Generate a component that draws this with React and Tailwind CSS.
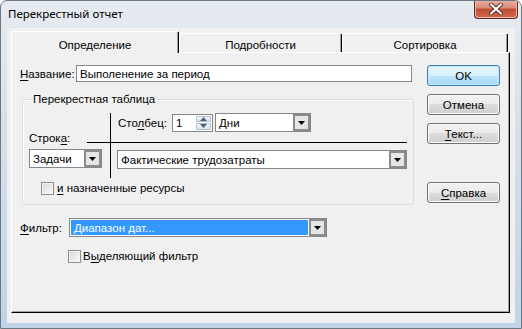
import React from "react";

const U = ({ children }) => (
  <span className="underline decoration-1 underline-offset-[2px]">{children}</span>
);

function Tri({ color = "#000" }) {
  return (
    <svg width="7" height="4" viewBox="0 0 7 4" className="block">
      <path d="M0 0H7L3.5 4Z" fill={color} />
    </svg>
  );
}

function DropBtn() {
  return (
    <div className="flex w-[17px] shrink-0 items-center justify-center border-2 border-[#8c8c8c] bg-[#e6e6e6] pt-px">
      <Tri />
    </div>
  );
}

function Combo({ className, children, selected }) {
  return (
    <div className={"flex h-[19px] shrink-0 border border-[#828790] bg-white " + className}>
      {selected ? (
        <div className="m-px flex min-w-0 flex-1 items-center bg-[#3399ff] pl-[3px] text-white">
          {children}
        </div>
      ) : (
        <div className="flex min-w-0 flex-1 items-center pl-[3px]">{children}</div>
      )}
      <DropBtn />
    </div>
  );
}

function Check() {
  return (
    <div className="h-[13px] w-[13px] shrink-0 border border-[#8e8f8f] bg-[linear-gradient(135deg,#d6d6d6,#fbfbfb)] shadow-[inset_0_0_0_1px_#f4f4f4]" />
  );
}

function Spin() {
  return (
    <div className="flex h-[18px] w-[41px] shrink-0 border border-[#828790] bg-white">
      <div className="flex flex-1 items-center pl-[3px]">1</div>
      <div className="flex w-[17px] flex-col gap-px p-px">
        <div className="flex flex-1 items-center justify-center rounded-[1px] border border-[#b4bfcc] bg-[linear-gradient(#f3f6f9,#d9e1ea)]">
          <svg width="7" height="4" viewBox="0 0 7 4" className="block">
            <path d="M0 4H7L3.5 0Z" fill="#4e6280" />
          </svg>
        </div>
        <div className="flex flex-1 items-center justify-center rounded-[1px] border border-[#b4bfcc] bg-[linear-gradient(#f3f6f9,#d9e1ea)]">
          <Tri color="#4e6280" />
        </div>
      </div>
    </div>
  );
}

function Btn({ children, def }) {
  return (
    <div
      className={
        def
          ? "flex h-[21px] w-[73px] items-center justify-center rounded-[3px] border border-[#3c7fb1] bg-[linear-gradient(#eaf6fd_0%,#d9f0fc_50%,#bee6fd_50%,#a7d9f5_100%)] shadow-[inset_0_0_0_1px_#c8e8fa]"
          : "flex h-[21px] w-[73px] items-center justify-center rounded-[3px] border border-[#707070] bg-[linear-gradient(#f2f2f2_0%,#ebebeb_50%,#dddddd_50%,#cfcfcf_100%)] shadow-[inset_0_0_0_1px_#fbfbfb]"
      }
    >
      {children}
    </div>
  );
}

function CloseX() {
  return (
    <svg width="14" height="12" viewBox="0 0 14 12" className="block">
      <path d="M2 1.5L12 10.5M12 1.5L2 10.5" stroke="#5a2a22" strokeWidth="4" strokeLinecap="round" />
      <path d="M2 1.5L12 10.5M12 1.5L2 10.5" stroke="#ffffff" strokeWidth="2.2" strokeLinecap="round" />
    </svg>
  );
}

export default function App() {
  return (
    <div className="flex h-[329px] w-[522px] flex-col overflow-hidden rounded-t-[7px] border border-[#6d7782] bg-[linear-gradient(180deg,#e6ebf0_0%,#d8e1ea_35%,#bfd4e8_100%)] font-['Liberation_Sans',Arial,sans-serif] text-[11.5px] leading-[14px] text-black">
      {/* title bar */}
      <div className="flex h-[27px] shrink-0 items-start justify-between">
        <div className="pl-[7px] pt-[5px] font-['Noto_Sans',sans-serif] text-[11.5px] leading-[16px] text-black">
          Перекрестный отчет
        </div>
        <div className="-mt-px mr-[3px] flex h-[19px] w-[44px] items-center justify-center rounded-b-[4px] border border-t-0 border-[#5e2a20] bg-[linear-gradient(#eab1a3_0%,#d98a76_45%,#c34a34_50%,#cf6a52_100%)] shadow-[inset_0_0_0_1px_#f0b8a8]">
          <CloseX />
        </div>
      </div>

      {/* client */}
      <div className="mx-[6px] mb-[5px] flex flex-1 flex-col bg-[#f0f0f0] pb-[10px] pl-[4px] pr-[5px] pt-[3px]">
        {/* tabs */}
        <div className="flex h-[21px] shrink-0 items-end">
          <div className="relative z-10 -mb-px flex h-[22px] w-[168px] items-center justify-center rounded-t-[2px] border-l border-r border-t border-white border-r-black bg-[#f0f0f0] pt-[4px] shadow-[inset_-1px_0_0_#a0a0a0]">
            Определение
          </div>
          <div className="flex h-[19px] w-[163px] items-center justify-center rounded-t-[2px] border-l border-r border-t border-white border-r-black bg-[#f0f0f0] pt-[3px] shadow-[inset_-1px_0_0_#a0a0a0]">
            Подробности
          </div>
          <div className="flex h-[19px] w-[166px] items-center justify-center rounded-t-[2px] border-l border-r border-t border-white border-r-black bg-[#f0f0f0] pt-[3px] shadow-[inset_-1px_0_0_#a0a0a0]">
            Сортировка
          </div>
        </div>

        {/* page */}
        <div className="flex flex-1 gap-[14px] border border-white border-b-black border-r-black bg-[#f0f0f0] pl-[8px] pt-[12px] shadow-[inset_-1px_-1px_0_#a0a0a0]">
          {/* left column */}
          <div className="flex w-[393px] flex-col">
            <div className="flex h-[17px] items-center">
              <div className="w-[56px]">
                <U>Н</U>азвание:
              </div>
              <div className="flex h-[17px] w-[336px] items-center border border-[#828790] bg-white pl-[3px]">
                Выполенение за период
              </div>
            </div>

            <fieldset className="ml-[2px] mt-[10px] w-[392px] rounded-[3px] border border-[#d5dfe5] px-[6px] pb-[9px] pt-[7px] shadow-[inset_1px_1px_0_#ffffff]">
              <legend className="ml-[2px] px-[2px] leading-[14px]">Перекрестная таблица</legend>
              <div className="grid grid-cols-[81px_297px]">
                <div className="flex items-end justify-between">
                  <div className="-mb-[2px]">
                    Строк<U>а</U>:
                  </div>
                  <div className="w-[23px] border-b border-black" />
                </div>
                <div className="flex items-center border-b border-l border-black pb-[10px] pl-[7px]">
                  <div className="w-[54px]">
                    Сто<U>л</U>бец:
                  </div>
                  <Spin />
                  <Combo className="ml-[2px] w-[96px]">Дни</Combo>
                </div>
                <div className="pt-[6px]">
                  <Combo className="w-[73px]">Задачи</Combo>
                </div>
                <div className="border-l border-black pb-[9px] pl-[6px] pt-[7px]">
                  <Combo className="w-[290px]">Фактические трудозатраты</Combo>
                </div>
              </div>
              <div className="ml-[12px] mt-[3px] flex items-center gap-[3px]">
                <Check />
                <div>
                  <U>и</U> назначенные ресурсы
                </div>
              </div>
            </fieldset>

            <div className="mt-[13px] flex h-[19px] items-center">
              <div className="w-[49px]">
                <U>Ф</U>ильтр:
              </div>
              <Combo className="w-[258px]" selected>
                Диапазон дат...
              </Combo>
            </div>

            <div className="ml-[48px] mt-[12px] flex items-center gap-[2px]">
              <Check />
              <div>
                В<U>ы</U>деляющий фильтр
              </div>
            </div>
          </div>

          {/* right column */}
          <div className="flex flex-col">
            <Btn def>OK</Btn>
            <div className="mt-[8px]">
              <Btn>Отмена</Btn>
            </div>
            <div className="mt-[8px]">
              <Btn>
                <span>
                  <U>Т</U>екст...
                </span>
              </Btn>
            </div>
            <div className="mt-[38px]">
              <Btn>
                <span>
                  <U>С</U>правка
                </span>
              </Btn>
            </div>
          </div>
        </div>
      </div>
    </div>
  );
}
